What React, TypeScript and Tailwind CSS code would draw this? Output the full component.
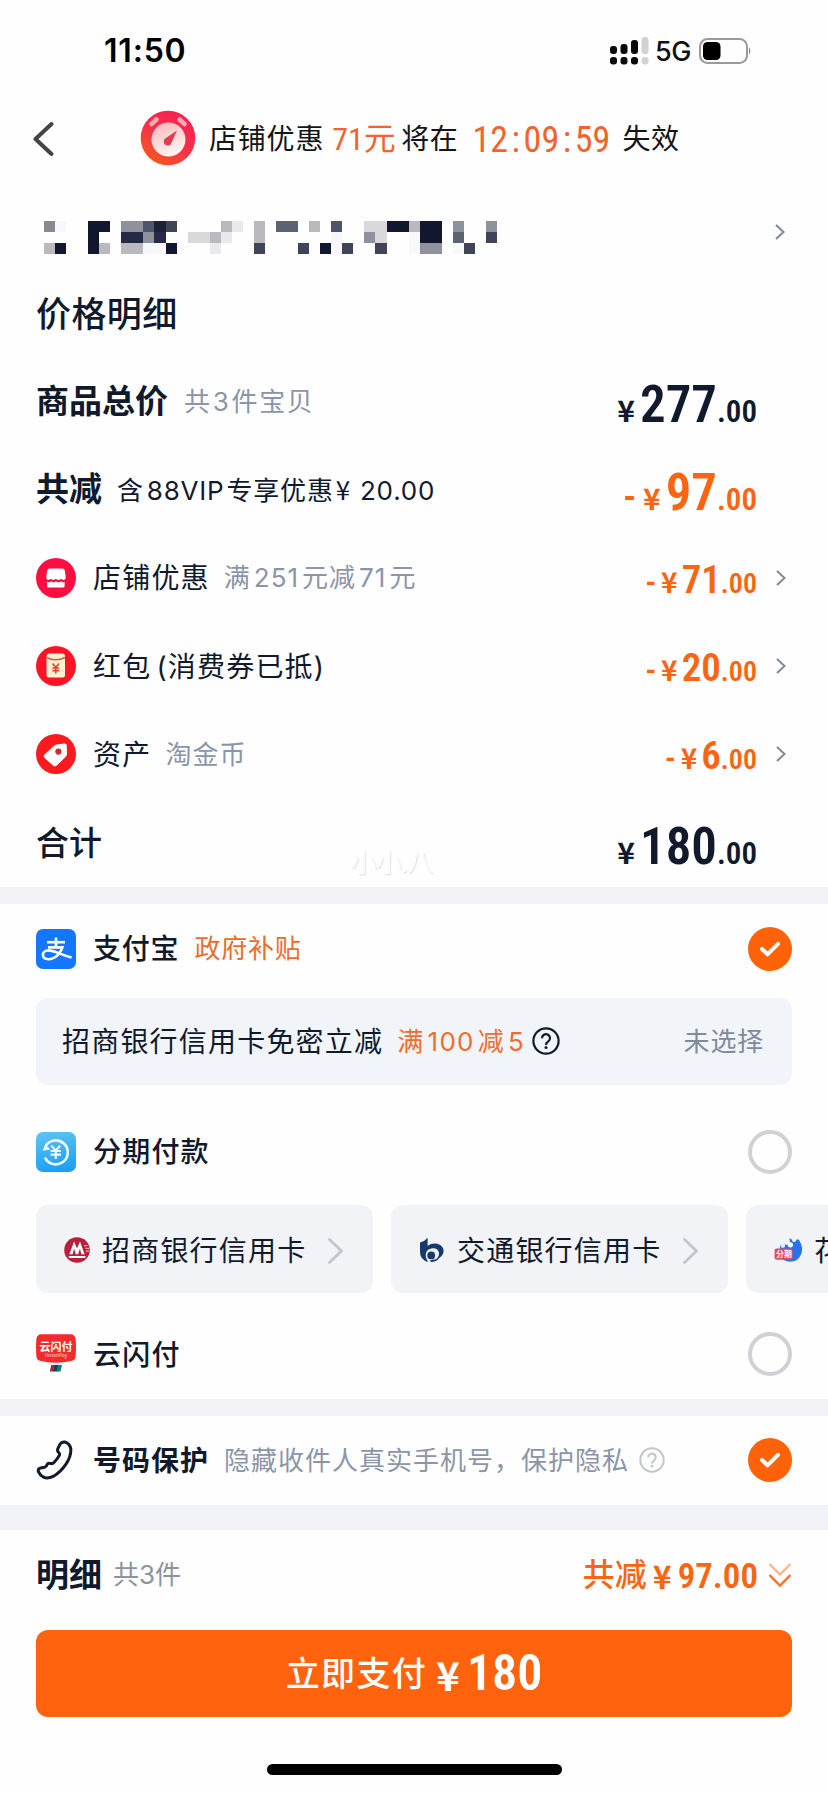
import type { ReactNode } from "react";
import { clsx } from "clsx";

const narrow = "font-['Roboto_Condensed','Roboto','Noto_Sans_CJK_SC',sans-serif] [font-stretch:82%]";

function Chevron({ className }: { className?: string }) {
  return (
    <svg viewBox="0 0 10 16" fill="none" stroke="currentColor" strokeWidth="2" className={className}>
      <path d="M1 1 L8.6 8 L1 15" />
    </svg>
  );
}

function HelpIcon({ className }: { className?: string }) {
  return (
    <svg viewBox="0 0 28 28" fill="none" stroke="currentColor" strokeWidth="2.2" className={className}>
      <circle cx="14" cy="14" r="12.6" />
      <path d="M10 11.2 a4 4 0 1 1 6.3 3.2 c-1.5 1.1 -2.3 1.8 -2.3 3.6" />
      <circle cx="14" cy="20.6" r="1.5" fill="currentColor" stroke="none" />
    </svg>
  );
}

function Radio({ checked }: { checked?: boolean }) {
  if (!checked) {
    return <span className="size-11 shrink-0 rounded-full border-4 border-[#cfd1d7]" />;
  }
  return (
    <span className="flex size-11 shrink-0 items-center justify-center rounded-full bg-[#ff6208]">
      <svg viewBox="0 0 22 18" fill="none" stroke="white" strokeWidth="4" strokeLinecap="round" strokeLinejoin="round" className="h-[18px] w-[22px]">
        <path d="M3 9 L8.5 14.3 L19 3.8" />
      </svg>
    </span>
  );
}

interface PriceProps {
  whole: string;
  minus?: boolean;
  big?: boolean;
  orange?: boolean;
}

function Price({ whole, minus, big, orange }: PriceProps) {
  return (
    <span
      className={clsx(
        "flex items-baseline font-semibold leading-none",
        narrow,
        orange ? "text-[#fb6512]" : "text-[#111a2c]",
      )}
    >
      {minus && (
        <span className={big ? "mr-[7px] text-[38px]" : "mr-[5px] text-[32px]"}>-</span>
      )}
      <span className={clsx("font-['Noto_Sans_CJK_SC'] font-bold", big ? "mr-[5px] text-[30px]" : "mr-1 text-[28px]")}>¥</span>
      <span className={big ? "text-[51px]" : "text-[39px]"}>{whole}</span>
      <span className={big ? "text-[31px]" : "text-[28px]"}>.00</span>
    </span>
  );
}

/* Icons */

function StopwatchIcon() {
  return (
    <svg viewBox="0 0 56 56" className="size-[56px]">
      <defs>
        <linearGradient id="watch" x1="0.8" y1="0" x2="0.2" y2="1">
          <stop offset="0" stopColor="#f91f55" />
          <stop offset="0.5" stopColor="#f4304a" />
          <stop offset="1" stopColor="#fa5a1c" />
        </linearGradient>
        <linearGradient id="dial" x1="0" y1="0" x2="0.4" y2="1">
          <stop offset="0" stopColor="#f9b3b6" />
          <stop offset="1" stopColor="#fff3f1" />
        </linearGradient>
      </defs>
      <circle cx="28" cy="28" r="27.3" fill="url(#watch)" />
      <g stroke="#fda9b0" strokeWidth="4.6" strokeLinecap="round">
        <path d="M11.5 14 L16.5 9.5" />
        <path d="M39.5 9.5 L44.5 14" />
      </g>
      <circle cx="28.5" cy="29.5" r="17" fill="url(#dial)" />
      <path d="M37 20.5 L31.6 32.4 a4 4 0 1 1 -5.2 -4.6 Z" fill="#e23b4f" />
    </svg>
  );
}

function ShopIcon() {
  return (
    <svg viewBox="0 0 40 40" className="size-10">
      <circle cx="20" cy="20" r="20" fill="#fb0f42" />
      <path d="M13 10.5 H26.5 a2.5 2.5 0 0 1 2.3 1.7 L29.6 18 v3 l-2.2 1 l-2.4 -1 l-2.6 1 l-2.6 -1 l-2.6 1 l-2.6 -1 l-2.2 1 l-2 -1 V18 l0.8 -5.8 a2.5 2.5 0 0 1 2.2 -1.7 Z" fill="white" />
      <path d="M11 23.8 l2.2 0.6 l2 -1 l2.4 1 l2.4 -1 l2.4 1 l2.4 -1 l2 1 l1.8 -0.6 V28 a1.6 1.6 0 0 1 -1.6 1.6 H12.6 a1.6 1.6 0 0 1 -1.6 -1.6 Z" fill="white" />
    </svg>
  );
}

function RedPacketIcon() {
  return (
    <svg viewBox="0 0 40 40" className="size-10">
      <circle cx="20" cy="20" r="20" fill="#fb1524" />
      <rect x="10.5" y="7.5" width="18.5" height="24" rx="2.5" fill="#fff0cf" />
      <path d="M10.5 11.5 Q19.7 16 29 11.5" fill="none" stroke="#c4604c" strokeWidth="1.5" />
      <path d="M16.6 17.5 L19.8 21.5 L23 17.5 M16.4 22 H23.2 M16.4 24.6 H23.2 M19.8 21.5 V27.6" fill="none" stroke="#e0442f" strokeWidth="1.6" />
    </svg>
  );
}

function TagIcon() {
  return (
    <svg viewBox="0 0 40 40" className="size-10">
      <circle cx="20" cy="20" r="20" fill="#fb1b1e" />
      <path d="M20.5 10.5 L28.5 9.6 Q30.6 9.6 30.8 11.6 L31 20 Q31 21.4 30 22.4 L20.8 31.6 Q18.8 33.2 17 31.6 L8.6 24 Q6.8 22.2 8.4 20.4 L18 11.8 Q19 10.7 20.5 10.5 Z" fill="white" />
      <circle cx="22.4" cy="17.6" r="3.1" fill="#d9262b" />
    </svg>
  );
}

function AlipayIcon() {
  return (
    <svg viewBox="0 0 40 40" className="size-10">
      <rect width="40" height="40" rx="7" fill="#1577ff" />
      <g fill="none" stroke="white" strokeWidth="2.6">
        <path d="M11 13.2 H29" />
        <path d="M20 8.5 V18.4" />
        <path d="M12 18.4 H26.4 C24.6 24 19.6 30.2 12.6 30.2 C8.6 30.2 6.9 28 6.9 25.8 C6.9 23.4 9.2 21.4 12.4 21.4 C18 21.4 24 25.4 35.6 28.6" />
      </g>
    </svg>
  );
}

function InstallmentIcon() {
  return (
    <svg viewBox="0 0 40 40" className="size-10">
      <defs>
        <linearGradient id="inst" x1="0.3" y1="0" x2="0.5" y2="1">
          <stop offset="0" stopColor="#5cc3f0" />
          <stop offset="1" stopColor="#1a9ff5" />
        </linearGradient>
      </defs>
      <rect width="40" height="40" rx="7" fill="url(#inst)" />
      <path d="M9.6 14 A12 12 0 1 1 9 25.6" fill="none" stroke="#f2fbff" strokeWidth="2.6" />
      <path d="M6.6 18.8 L9.4 12.6 L14.4 17.4 Z" fill="#f2fbff" />
      <path d="M15.4 13.6 L19.8 18.6 L24.2 13.6 M14.6 19 H25 M14.6 22.6 H25 M19.8 18.6 V27" fill="none" stroke="#f2fbff" strokeWidth="2.1" />
    </svg>
  );
}

function CloudPayIcon() {
  return (
    <div className="relative h-10 w-10 font-['Noto_Sans_CJK_SC',sans-serif]">
      <svg viewBox="0 0 40 40" className="size-10">
        <path d="M5.5 0.2 H34.5 Q39 0.2 39.6 5 Q40.4 13 39.6 22.5 Q39.2 26 36 26.8 Q20 30.6 4 26.8 Q0.8 26 0.4 22.5 Q-0.4 13 0.4 5 Q1 0.2 5.5 0.2 Z" fill="#f32a2b" />
        <path d="M15.2 31 H19.4 L18 37.4 H13.8 Z" fill="#a52b3c" />
        <path d="M18.6 31 H22.8 L21.4 37.4 H17.2 Z" fill="#173f68" />
        <path d="M22 31 H26 L24.6 37.4 H20.6 Z" fill="#128084" />
      </svg>
      <span className="absolute left-0 top-[6px] w-10 text-center text-[11px] font-bold leading-[12px] text-white">云闪付</span>
      <span className="absolute left-0 top-[18px] w-10 text-center text-[5px] leading-[6px] text-white/80">UnionPay</span>
    </div>
  );
}

function CmbIcon() {
  return (
    <svg viewBox="0 0 26 26" className="mt-[2px] size-[26px]">
      <circle cx="13" cy="13" r="12.8" fill="#b8203c" />
      <path d="M5.4 17.2 L10 4.4 L13 11.6 L16 4.4 L20.6 17.2 H17.4 L15.9 11.6 L14.2 17.2 H11.8 L10.1 11.6 L8.6 17.2 Z" fill="white" />
      <path d="M4.8 20 H21.4" stroke="white" strokeWidth="2" />
      <path d="M20 8.6 H23.4 M21.4 11.4 H25 M22 14.2 H25" stroke="#e7a6b2" strokeWidth="1.2" />
    </svg>
  );
}

function BocomIcon() {
  return (
    <svg viewBox="0 0 26 26" className="mt-[2px] size-[26px]">
      <path d="M1 5.6 Q5.6 4.6 8.6 0.8 V8.8 Q13 5.6 18.4 6.8 Q24.8 8.8 24.6 14.6 Q23.8 20.6 17.4 22 Q20.4 19.6 20 15.6 Q18.6 10.8 13.4 11.2 Q7.6 12 6.8 17 Q6.4 21.4 9.4 25 Q5 24.2 2.6 20.8 Q1 18.2 1 14.6 Z" fill="#173a6e" />
      <circle cx="12.2" cy="18.4" r="3.9" fill="#173a6e" />
      <path d="M11.4 24.8 Q17.4 25.6 20.6 20.6 Q16.6 23.4 11.4 23 Z" fill="#173a6e" />
    </svg>
  );
}

function HuabeiIcon() {
  return (
    <div className="relative mt-[2px] h-[26px] w-7">
      <svg viewBox="0 0 28 26" className="h-[26px] w-7">
        <path d="M15.4 1.6 Q17.6 1 18.6 4.6 Q20 5.6 21.4 4.4 Q23.2 0.8 25.4 3.4 Q29.4 10.2 27.4 16.4 Q24.6 24.8 15.6 24.8 Q8 24.4 6 17.6 V8.6 Q8.4 5.8 12.4 7.8 Q15.2 8.6 16 5.6 Z" fill="#2a72e8" />
        <circle cx="16.4" cy="7.8" r="2.6" fill="white" />
        <circle cx="8.8" cy="8.6" r="2.4" fill="#dcecff" />
        <rect x="0.6" y="11.4" width="18" height="11.4" rx="2" fill="#e8475c" />
      </svg>
      <span className="absolute left-[2px] top-[12px] w-4 text-center font-['Noto_Sans_CJK_SC',sans-serif] text-[8px] font-bold leading-[10px] text-white">分期</span>
    </div>
  );
}

function PhoneIcon() {
  return (
    <svg viewBox="0 0 38 40" fill="none" stroke="#111a2c" strokeWidth="3" strokeLinejoin="round" strokeLinecap="round" className="h-10 w-[38px]">
      <path d="M23.8 4.6 Q25.6 1.6 28.8 2 Q34 3.6 34.8 9 Q35.2 16.4 30 24.2 Q24.4 32.4 17.6 36.2 Q11.6 39.2 7.6 37.2 Q3.6 34.6 2.4 31.6 Q1.6 28.8 4.6 28 L8.8 27.2 Q10.6 26.6 11 24.6 Q12 22.6 14.2 23.4 Q16.4 24.2 18.2 22.2 Q21.8 18.4 23.4 15.4 Q24 13.6 22.6 12.4 Q20.8 10.8 22 8.4 Z" />
    </svg>
  );
}

/* Censored address, one letter per cell colour */

const cellColor: Record<string, string> = {
  a: "#8a8a8e", b: "#11182e", c: "#b9b9be", d: "#8f929d", e: "#4e5568", f: "#1b2238",
  g: "#3f4457", h: "#262a46", i: "#d9d9db", j: "#e9e9ec", k: "#f8f8fb", l: "#5d6273",
};

const cells = [
  "ak..bb.ddefg....cj.c.ll.c.e..iibbcbb.d..d",
  "....b..hhdh..iicj..c......k..di..kbb.l..g",
  "cb..bc.cckkb...j...g...g.bkg..g..kdd.kg..",
];

function Mosaic() {
  return (
    <svg viewBox="0 0 451 33" className="h-[33px] w-[453px]" shapeRendering="crispEdges" preserveAspectRatio="none">
      {cells.map((row, y) =>
        [...row].map((c, x) =>
          c === "." ? null : (
            <rect key={`${x}-${y}`} x={x * 11} y={y * 11} width="11" height="11" fill={cellColor[c]} />
          ),
        ),
      )}
    </svg>
  );
}

function StatusBar() {
  return (
    <div className="flex h-[100px] items-center pl-[104px] pr-[76px] pt-px">
      <span className="pt-px font-['Inter'] text-[32px] font-semibold leading-none tracking-[0.8px] text-black">11:50</span>
      <svg viewBox="0 0 39 28" className="ml-auto h-7 w-[39px]">
        <g fill="#0a0a0a">
          <rect x="0" y="9" width="7" height="8" rx="3" />
          <rect x="10.5" y="7" width="7" height="10" rx="3" />
          <rect x="21" y="3" width="7" height="14" rx="3" />
          <rect x="0" y="20" width="7" height="7.4" rx="3" />
          <rect x="10.5" y="20" width="7" height="7.4" rx="3" />
          <rect x="21" y="20" width="7" height="7.4" rx="3" />
        </g>
        <g fill="#d2d2d2">
          <rect x="31.5" y="0" width="7" height="17" rx="3" />
          <rect x="31.5" y="20" width="7" height="7.4" rx="3" />
        </g>
      </svg>
      <span className="ml-[6px] pt-[2px] font-['Inter'] text-[27px] font-medium leading-none tracking-[-0.4px] text-[#111]">5G</span>
      <svg viewBox="0 0 53 26" className="ml-2 h-[26px] w-[53px]">
        <rect x="1" y="1" width="47" height="24" rx="7.5" fill="none" stroke="#9a9a9a" strokeWidth="2" />
        <rect x="4" y="4" width="17.5" height="18" rx="4.5" fill="#000" />
        <path d="M50 9 Q52.6 13 50 17 Z" fill="#8a8a8a" />
      </svg>
    </div>
  );
}

interface RowProps {
  icon?: ReactNode;
  title: ReactNode;
  note?: ReactNode;
  noteClass?: string;
  titleClass?: string;
  arrow?: boolean;
  children: ReactNode;
}

function PriceRow({ icon, title, note, noteClass, titleClass, arrow, children }: RowProps) {
  return (
    <div className="flex h-[88.3px] items-center pl-9 pr-[42px]">
      {icon && <div className="mr-[17px]">{icon}</div>}
      <span className={clsx("pt-px", titleClass ?? "text-[28px] tracking-[1.2px]")}>{title}</span>
      <span className={clsx("pt-px", noteClass ?? "ml-[14px] text-[26px] tracking-[1px] text-[#8b95a7]")}>{note}</span>
      <div className={clsx("ml-auto", icon ? "pt-[5px]" : "pt-[7px]")}>{children}</div>
      <div className="ml-[19px] w-[10px]">
        {arrow && <Chevron className="h-4 w-[10px] text-[#7f879a]" />}
      </div>
    </div>
  );
}

function BankCard({ icon, name }: { icon: ReactNode; name: string }) {
  return (
    <div className="flex h-[88px] w-[337px] shrink-0 items-center rounded-xl bg-[#f2f3f7] pl-7">
      {icon}
      <span className="ml-3 whitespace-nowrap pt-1 text-[28px] tracking-[1.2px]">{name}</span>
      <svg viewBox="0 0 15 26" fill="none" stroke="#c3c6cf" strokeWidth="2.8" strokeLinecap="round" className="ml-[22px] mt-[5px] h-[26px] w-[15px]">
        <path d="M1.5 1.5 L13.4 13 L1.5 24.5" />
      </svg>
    </div>
  );
}

export default function App() {
  return (
    <div className="h-[1793px] w-[828px] overflow-hidden bg-[#fefefe] font-['Inter','Noto_Sans_CJK_SC',sans-serif] leading-none text-[#111a2c]">
      <StatusBar />

      {/* Coupon countdown */}
      <div className="flex h-[76px] items-center whitespace-nowrap pl-8 text-[28px] text-[#151515]">
        <svg viewBox="0 0 22 36" fill="none" stroke="#444" strokeWidth="4" strokeLinecap="round" strokeLinejoin="round" className="mt-px h-9 w-[22px]">
          <path d="M19.5 3 L3.5 18 L19.5 33" />
        </svg>
        <div className="ml-[86px]">
          <StopwatchIcon />
        </div>
        <span className="ml-[13px] pt-[2px] tracking-[0.8px]">店铺优惠</span>
        <span className={clsx("ml-2 flex w-[60px] pt-[2px] text-[32px] text-[#f2642b]", narrow)}>71元</span>
        <span className="ml-[9px] pt-[2px] tracking-[0.6px]">将在</span>
        <span className={clsx("ml-[14px] flex w-[138px] justify-between pt-[3px] text-[36px] text-[#f2642b]", narrow)}>
          <span>12</span>
          <span>:</span>
          <span>09</span>
          <span>:</span>
          <span>59</span>
        </span>
        <span className="ml-3 pt-[2px] tracking-[0.6px]">失效</span>
      </div>

      {/* Address */}
      <div className="flex h-[93px] items-center justify-between pl-11 pr-[43px]">
        <div className="pt-[30px]">
          <Mosaic />
        </div>
        <Chevron className="mt-[18px] h-4 w-[10px] text-[#7f879a]" />
      </div>

      {/* Price breakdown */}
      <div className="flex h-[88px] items-center pl-9">
        <h2 className="pt-[2px] text-[35px] font-medium tracking-[0.4px]">价格明细</h2>
      </div>
      <PriceRow
        titleClass="text-[33px] font-bold"
        title="商品总价"
        note={
          <>
            共<span className="mx-px">3</span>件宝贝
          </>
        }
        noteClass="ml-4 text-[26px] tracking-[1.7px] text-[#8b95a7]"
      >
        <Price big whole="277" />
      </PriceRow>
      <PriceRow
        titleClass="text-[33px] font-bold"
        title="共减"
        note={
          <>
            含<span className="ml-[3px] mr-[2px]">88VIP</span>专享优惠
            <span className="font-['Noto_Sans_CJK_SC'] ml-[2px]">¥</span>
            <span className="ml-[9px]">20.00</span>
          </>
        }
        noteClass="ml-[15px] text-[26px] tracking-[0.8px]"
      >
        <Price big orange minus whole="97" />
      </PriceRow>
      <PriceRow
        icon={<ShopIcon />}
        title="店铺优惠"
        note={
          <>
            满<span className="ml-[3px] mr-[3px]">251</span>元减<span className="ml-[3px] mr-[3px]">71</span>元
          </>
        }
        arrow
      >
        <Price orange minus whole="71" />
      </PriceRow>
      <PriceRow
        icon={<RedPacketIcon />}
        title={
          <>
            红包<span className="ml-[5px]">(消费券已抵)</span>
          </>
        }
        arrow
      >
        <Price orange minus whole="20" />
      </PriceRow>
      <PriceRow icon={<TagIcon />} title="资产" note="淘金币" arrow>
        <Price orange minus whole="6" />
      </PriceRow>
      <div className="relative">
        <PriceRow titleClass="text-[33px] font-medium" title="合计">
          <Price big whole="180" />
        </PriceRow>
        <span className="absolute left-[351px] top-[52px] text-[26px] font-light tracking-[-1px] text-white [text-shadow:1px_1px_1px_#dadade]">
          小小.八
        </span>
      </div>

      <div className="h-[17px] bg-[#f1f3f7]" />

      {/* Payment methods */}
      <div className="flex h-[90px] items-center px-9">
        <AlipayIcon />
        <span className="ml-[17px] pt-px text-[28px] font-medium tracking-[0.8px]">支付宝</span>
        <span className="ml-[15px] mr-auto pt-px text-[26px] tracking-[0.8px] text-[#ee6c2b]">政府补贴</span>
        <Radio checked />
      </div>
      <div className="mx-9 mt-1 flex h-[87px] items-center rounded-xl bg-[#f1f4f8] pl-[26px] pr-7">
        <span className="pt-px text-[28px] tracking-[1.2px]">招商银行信用卡免密立减</span>
        <span className="ml-[14px] pt-px text-[26px] tracking-[1.3px] text-[#f26c2b]">
          满<span className="mx-[3px]">100</span>减<span className="ml-[3px]">5</span>
        </span>
        <HelpIcon className="ml-[7px] size-7" />
        <span className="ml-auto pt-px text-[26px] tracking-[0.8px] text-[#7f8a9c]">未选择</span>
      </div>
      <div className="mt-[22px] flex h-[90px] items-center px-9">
        <InstallmentIcon />
        <span className="ml-[17px] mr-auto pt-px text-[28px] font-medium tracking-[1.2px]">分期付款</span>
        <Radio />
      </div>
      <div className="mt-2 flex gap-[18px] overflow-hidden pl-9">
        <BankCard icon={<CmbIcon />} name="招商银行信用卡" />
        <BankCard icon={<BocomIcon />} name="交通银行信用卡" />
        <BankCard icon={<HuabeiIcon />} name="花呗分期" />
      </div>
      <div className="mt-[17px] flex h-[89px] items-center px-9">
        <CloudPayIcon />
        <span className="ml-[17px] mr-auto pt-px text-[28px] font-medium tracking-[1.2px]">云闪付</span>
        <Radio />
      </div>

      <div className="h-[17px] bg-[#f1f3f6]" />

      <div className="flex h-[89px] items-center px-9">
        <PhoneIcon />
        <span className="ml-[19px] pt-px text-[28px] font-bold tracking-[1px]">号码保护</span>
        <span className="ml-[15px] pt-px text-[26px] tracking-[1px] text-[#8b95a7]">隐藏收件人真实手机号，保护隐私</span>
        <HelpIcon className="ml-[10px] mr-auto size-[26px] text-[#c3c6cb]" />
        <Radio checked />
      </div>

      <div className="h-[25px] bg-[#f1f3f8]" />

      {/* Bottom bar */}
      <div className="flex h-[90px] items-center pl-9 pr-9">
        <span className="pt-px text-[33px] font-bold">明细</span>
        <span className="ml-[11px] mr-auto pt-px text-[26px] text-[#8b93a1]">共3件</span>
        <span className="pt-px text-[32px] font-medium text-[#fb6512]">共减</span>
        <span className="ml-[6px] font-['Noto_Sans_CJK_SC'] text-[32px] font-bold text-[#fb6512]">¥</span>
        <span className={clsx("ml-[6px] pt-[3px] text-[35px] font-semibold text-[#fb6512]", narrow)}>97.00</span>
        <svg viewBox="0 0 24 26" fill="none" strokeWidth="2.4" className="ml-[10px] h-[26px] w-6">
          <path d="M1.5 2 L12 12.6 L22.5 2" stroke="#fbb793" />
          <path d="M1.5 13 L12 23.6 L22.5 13" stroke="#f9702a" />
        </svg>
      </div>
      <button className="mx-9 mt-[10px] flex h-[87px] w-[756px] items-center justify-center rounded-xl bg-[#ff630d] text-white">
        <span className="pt-px text-[34px] font-medium tracking-[1.4px]">立即支付</span>
        <span className="ml-[9px] pt-[2px] font-['Noto_Sans_CJK_SC'] text-[40px] font-bold">¥</span>
        <span className={clsx("ml-[7px] text-[50px] font-semibold", narrow)}>180</span>
      </button>
      <div className="mx-auto mt-[47px] h-[11px] w-[295px] rounded-full bg-black" />
    </div>
  );
}
